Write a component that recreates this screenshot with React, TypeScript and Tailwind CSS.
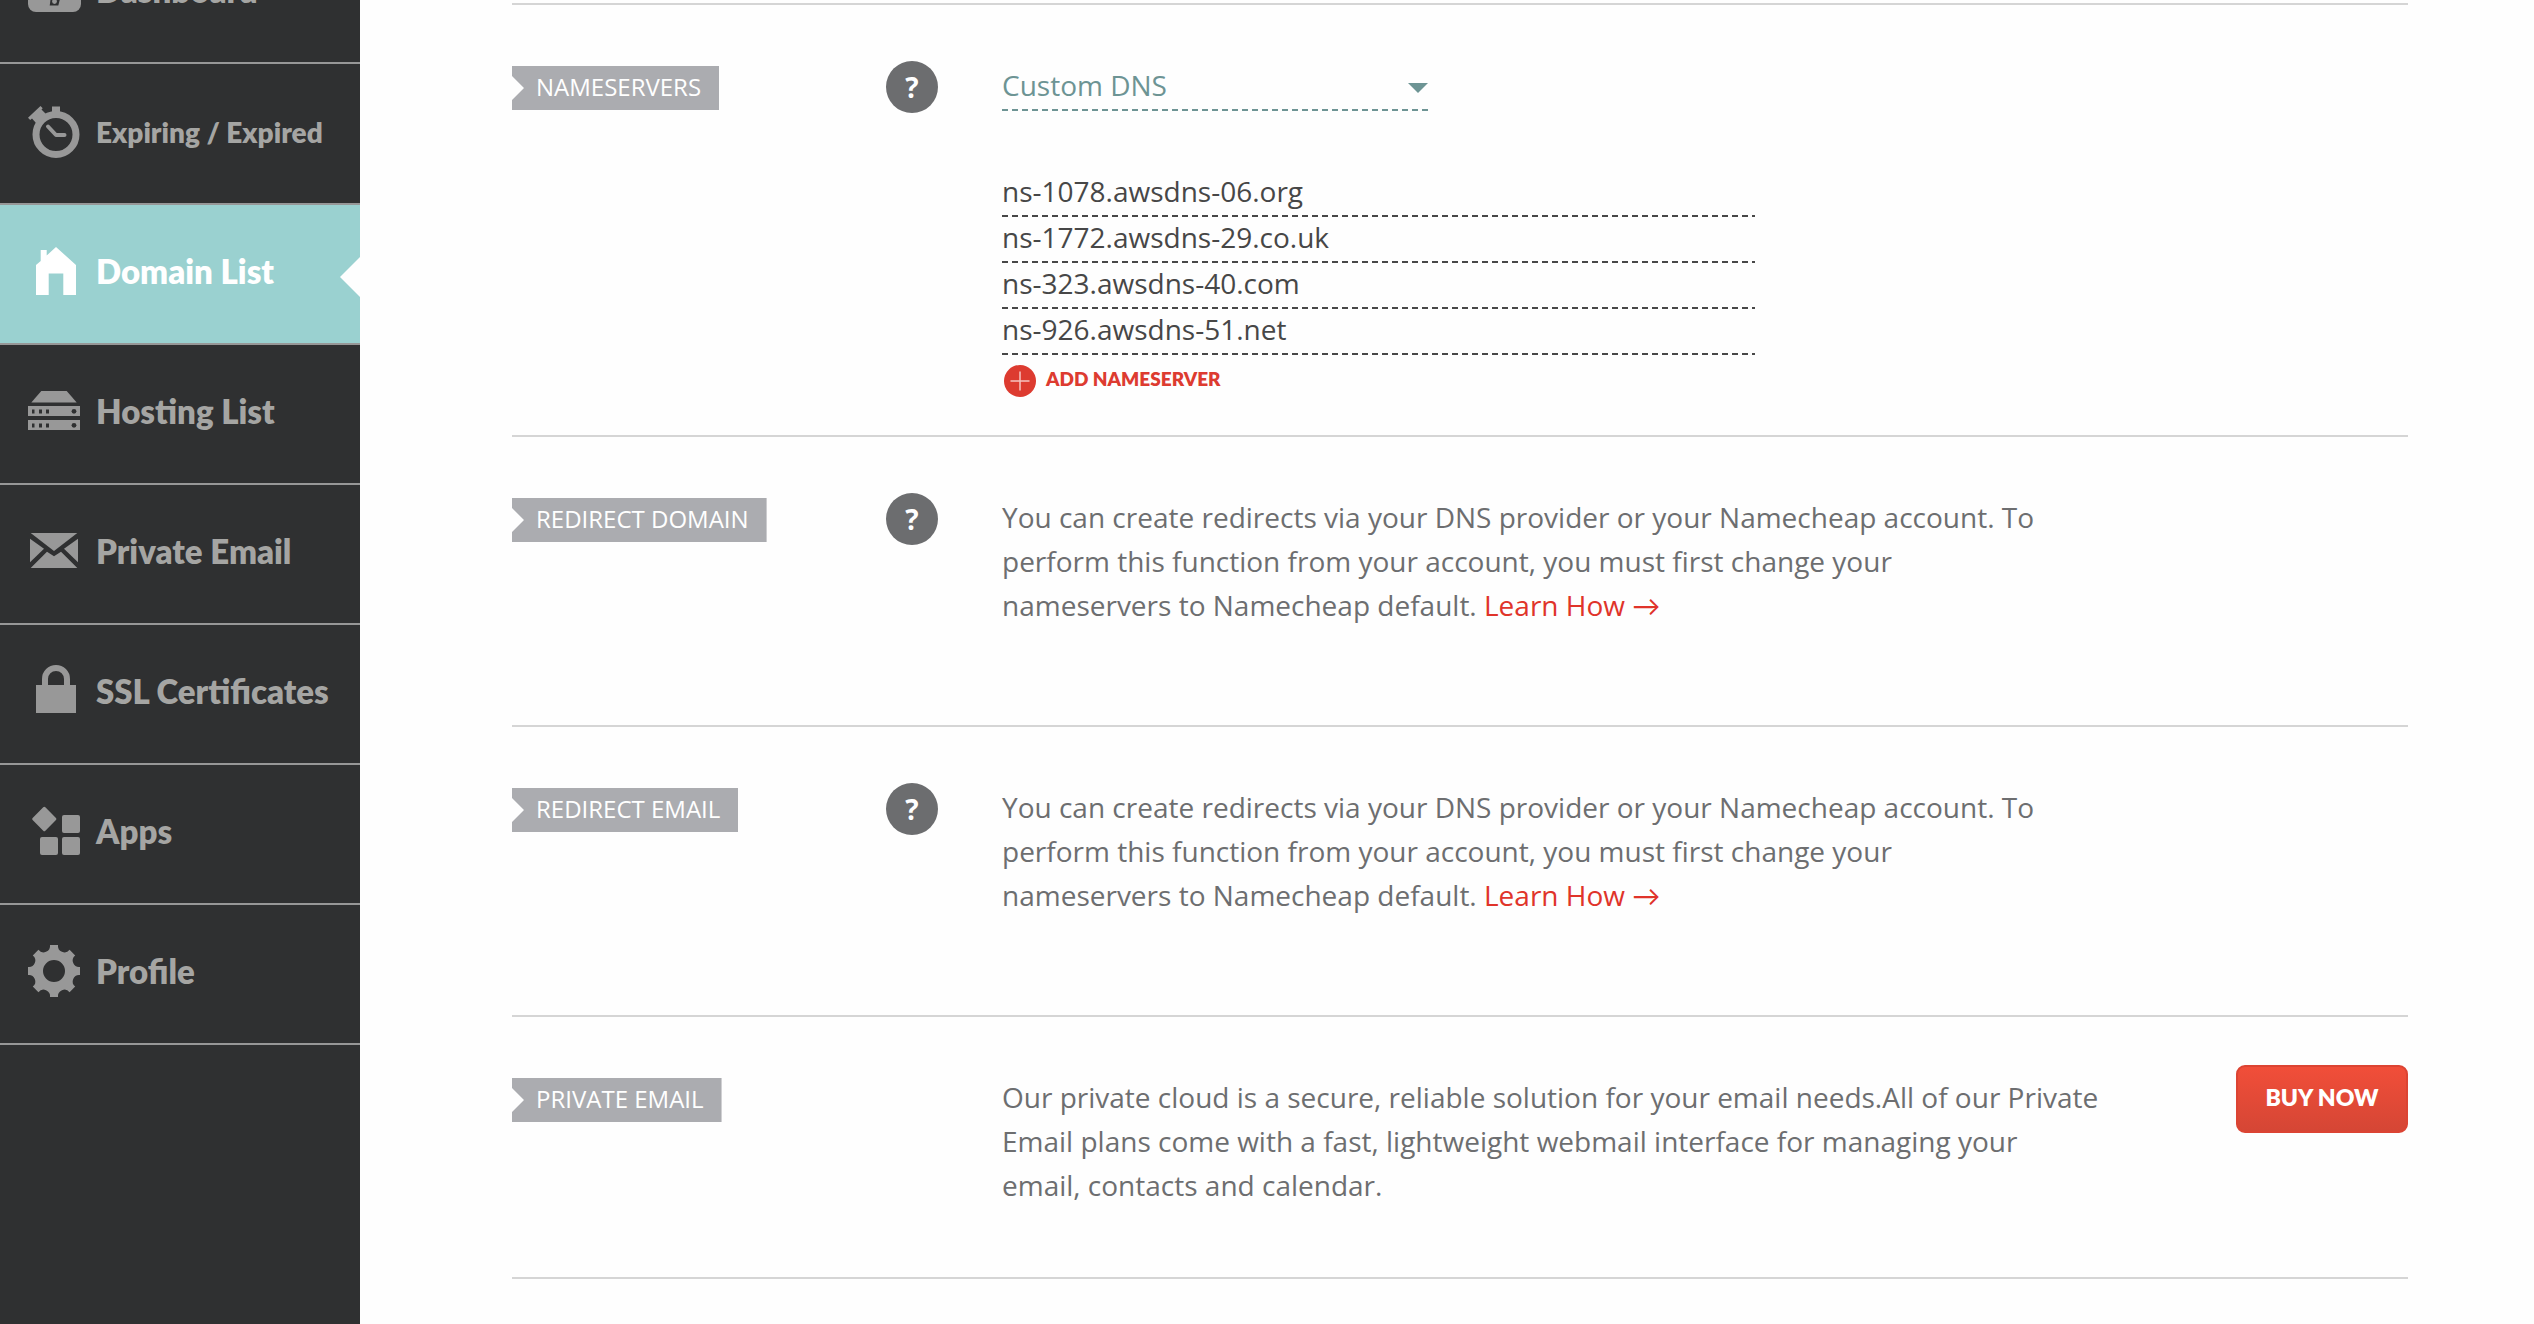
import type { ReactNode } from "react";

const sans = "font-['Open_Sans','Lato',sans-serif]";
const heading = "font-['Lato','Open_Sans',sans-serif]";

function Icon({ children }: { children: ReactNode }) {
  return (
    <svg viewBox="0 0 60 60" className="size-[60px] shrink-0 overflow-visible" fill="currentColor" aria-hidden="true">
      {children}
    </svg>
  );
}

const icons = {
  dashboard: (
    <Icon>
      <rect x="4" y="4" width="53" height="45" rx="8" />
      <path d="M27.5 30L25.7 42.5H34.3L36.5 34V30Z" className="fill-[#2f3031]" />
      <circle cx="30.5" cy="38.5" r="2.4" />
    </Icon>
  ),
  stopwatch: (
    <Icon>
      <circle cx="32" cy="30.5" r="20" fill="none" stroke="currentColor" strokeWidth="7" />
      <path d="M28 2.5H36V10H28Z" />
      <path d="M4 13.7L16.5 2L18.7 4.2L17.5 5.5L22 10L12 19L8 14.5L6.2 16Z" />
      <path d="M24 22.5L32 31H40.5" fill="none" stroke="currentColor" strokeWidth="4" strokeLinecap="round" strokeLinejoin="round" />
    </Icon>
  ),
  house: (
    <Icon>
      <path d="M12 51V21L16.7 17V6H22.7V11.5L32 3L52 21V51H39.3V29.5H24.7V51Z" />
    </Icon>
  ),
  server: (
    <Icon>
      <path d="M17.3 7H42.7L52.7 18.5H7.3Z" />
      <path d="M4 22H56V32H4ZM4 36H56V46H4Z" />
      <g className="fill-[#2f3031]">
        <path d="M8 25.5H10.5V29.5H8ZM15 25.5H18V29.5H15ZM22 25.5H25V29.5H22Z" />
        <path d="M8 39.5H10.5V43.5H8ZM15 39.5H18V43.5H15ZM22 39.5H25V43.5H22Z" />
        <circle cx="50" cy="27.3" r="2.4" />
        <circle cx="50" cy="41.3" r="2.4" />
      </g>
    </Icon>
  ),
  envelope: (
    <Icon>
      <path d="M6.7 9H53.3L30 27Z" />
      <path d="M6 14.7L20 24.7L6 38.3Z" />
      <path d="M54 14.7L40 24.7L54 38.3Z" />
      <path d="M6.7 44L23 27.7L30 32.3L37 27.7L53.3 44Z" />
    </Icon>
  ),
  lock: (
    <Icon>
      <path d="M12 21H52V49H12Z" />
      <path d="M21 22V15a11 11 0 0 1 22 0V22" fill="none" stroke="currentColor" strokeWidth="6" />
    </Icon>
  ),
  apps: (
    <Icon>
      <rect x="11.3" y="6" width="18" height="18" rx="1.5" transform="rotate(45 20.3 15)" />
      <rect x="38" y="11" width="18" height="18" rx="2" />
      <rect x="16" y="33" width="18" height="18" rx="2" />
      <rect x="38" y="33" width="18" height="18" rx="2" />
    </Icon>
  ),
  gear: (
    <Icon>
      <path
        transform="translate(30 27)"
        fillRule="evenodd"
        d="M-4 -26L4 -26A6.5 6.5 0 0 0 15.56 -21.21L21.21 -15.56A6.5 6.5 0 0 0 26 -4L26 4A6.5 6.5 0 0 0 21.21 15.56L15.56 21.21A6.5 6.5 0 0 0 4 26L-4 26A6.5 6.5 0 0 0 -15.56 21.21L-21.21 15.56A6.5 6.5 0 0 0 -26 4L-26 -4A6.5 6.5 0 0 0 -21.21 -15.56L-15.56 -21.21A6.5 6.5 0 0 0 -4 -26ZM0 -11A11 11 0 1 0 0 11A11 11 0 1 0 0 -11Z"
      />
    </Icon>
  ),
};

type NavItem = { label: string; icon: ReactNode; size?: string; height?: string; active?: boolean };

const navItems: NavItem[] = [
  { label: "Dashboard", icon: icons.dashboard, height: "h-16" },
  { label: "Expiring / Expired", icon: icons.stopwatch, size: "text-[28px]", height: "h-[141px]" },
  { label: "Domain List", icon: icons.house, active: true },
  { label: "Hosting List", icon: icons.server },
  { label: "Private Email", icon: icons.envelope },
  { label: "SSL Certificates", icon: icons.lock },
  { label: "Apps", icon: icons.apps },
  { label: "Profile", icon: icons.gear },
];

function Sidebar() {
  return (
    <nav aria-label="Account" className={`w-[360px] shrink-0 overflow-hidden bg-[#2f3031] ${heading}`}>
      <ul>
        {navItems.map(({ label, icon, size = "text-[33px]", height = "h-[140px]", active }) => (
          <li key={label} className={`flex items-end border-b-2 border-[#979797] ${height}`}>
            <a
              href="#"
              aria-current={active ? "page" : undefined}
              className={`relative flex h-[138px] w-full items-center gap-3 pl-6 ${
                active ? "bg-[#9ad1d0] text-white" : "text-[#989898]"
              }`}
            >
              {icon}
              <span className={`pb-1 font-extrabold whitespace-nowrap ${size} ${active ? "" : "text-[#a5a5a3]"}`}>{label}</span>
              {active && (
                <svg viewBox="0 0 20 40" className="absolute top-[52px] right-0 h-10 w-5 fill-[#fefefe]" aria-hidden="true">
                  <path d="M20 0V40L0 20Z" />
                </svg>
              )}
            </a>
          </li>
        ))}
      </ul>
    </nav>
  );
}

type SectionProps = { title: string; help?: boolean; action?: ReactNode; padding: string; children: ReactNode };

function Section({ title, help, action, padding, children }: SectionProps) {
  return (
    <section className={`grid grid-cols-[374px_116px_1fr_auto] items-start border-b-2 border-[#d5d5d5] pt-14 ${padding}`}>
      <h2 className="mt-[5px] flex h-11 items-center justify-self-start bg-[#abacb0] pr-[18px] pb-0.5 pl-6 text-[24px] whitespace-nowrap text-white [clip-path:polygon(0_0,100%_0,100%_100%,0_100%,0_34px,12px_22px,0_10px)]">
        {title}
      </h2>
      <div>
        {help && (
          <button
            type="button"
            aria-label={`Help: ${title}`}
            className="flex size-[52px] items-center justify-center rounded-full bg-[#6c6d6f] text-[28px] font-bold text-white"
          >
            ?
          </button>
        )}
      </div>
      <div>{children}</div>
      <div className="-mt-2">{action}</div>
    </section>
  );
}

const dashedDark =
  "bg-[repeating-linear-gradient(to_right,#474747_0_6px,transparent_6px_10px)] bg-[length:100%_2px] bg-bottom bg-no-repeat";
const dashedTeal =
  "bg-[repeating-linear-gradient(to_right,#6d9494_0_6px,transparent_6px_10px)] bg-[length:100%_2px] bg-bottom bg-no-repeat";

const nameservers = ["ns-1078.awsdns-06.org", "ns-1772.awsdns-29.co.uk", "ns-323.awsdns-40.com", "ns-926.awsdns-51.net"];

const copy = "mt-0.5 text-[28px] leading-[44px] whitespace-nowrap text-[#6d6e70]";

function RedirectCopy() {
  return (
    <p className={copy}>
      You can create redirects via your DNS provider or your Namecheap account. To
      <br />
      perform this function from your account, you must first change your
      <br />
      nameservers to Namecheap default.{" "}
      <a href="#" className="text-[#e0342a]">
        Learn How →
      </a>
    </p>
  );
}

export default function App() {
  return (
    <div className={`flex min-h-screen bg-[#fefefe] ${sans}`}>
      <Sidebar />
      <main className="min-w-0 flex-1 pt-[3px] pr-[126px] pl-[152px]">
        <div className="border-t-2 border-[#d5d5d5]">
          <Section title="NAMESERVERS" help padding="pb-[38px]">
            <div className="relative w-[426px]">
              <select
                aria-label="Nameserver type"
                className={`h-[50px] w-full appearance-none pb-0.5 text-[28px] text-[#6d9494] outline-none ${dashedTeal}`}
              >
                <option>Custom DNS</option>
              </select>
              <svg viewBox="0 0 20 10" className="pointer-events-none absolute top-[22px] right-0 h-2.5 w-5 fill-[#6d9494]" aria-hidden="true">
                <path d="M0 0H20L10 10Z" />
              </svg>
            </div>
            <div className="mt-[60px] flex w-[753px] flex-col">
              {nameservers.map((server, i) => (
                <input
                  key={server}
                  type="text"
                  aria-label={`Nameserver ${i + 1}`}
                  defaultValue={server}
                  className={`h-[46px] w-full pb-1.5 text-[28px] text-[#474747] outline-none ${dashedDark}`}
                />
              ))}
            </div>
            <button type="button" className={`mt-2.5 ml-0.5 flex h-8 items-center gap-2.5 text-[#dd3b30] ${heading}`}>
              <svg viewBox="0 0 32 32" className="size-8" aria-hidden="true">
                <circle cx="16" cy="16" r="16" fill="currentColor" />
                <path d="M6.5 16H25.5M16 6.5V25.5" className="stroke-[#f6c4c0]" strokeWidth="1.5" />
              </svg>
              <span className="pb-1 text-[19px] font-extrabold">ADD NAMESERVER</span>
            </button>
          </Section>
          <Section title="REDIRECT DOMAIN" help padding="pb-[98px]">
            <RedirectCopy />
          </Section>
          <Section title="REDIRECT EMAIL" help padding="pb-[98px]">
            <RedirectCopy />
          </Section>
          <Section
            title="PRIVATE EMAIL"
            padding="pb-[70px]"
            action={
              <button
                type="button"
                className={`flex h-[68px] w-[172px] items-center justify-center rounded-[9px] border-2 border-[#dc4433] bg-linear-to-b from-[#f14e39] to-[#d54635] pb-1 text-[23px] font-extrabold text-white ${heading}`}
              >
                BUY NOW
              </button>
            }
          >
            <p className={copy}>
              Our private cloud is a secure, reliable solution for your email needs.All of our Private
              <br />
              Email plans come with a fast, lightweight webmail interface for managing your
              <br />
              email, contacts and calendar.
            </p>
          </Section>
        </div>
      </main>
    </div>
  );
}
